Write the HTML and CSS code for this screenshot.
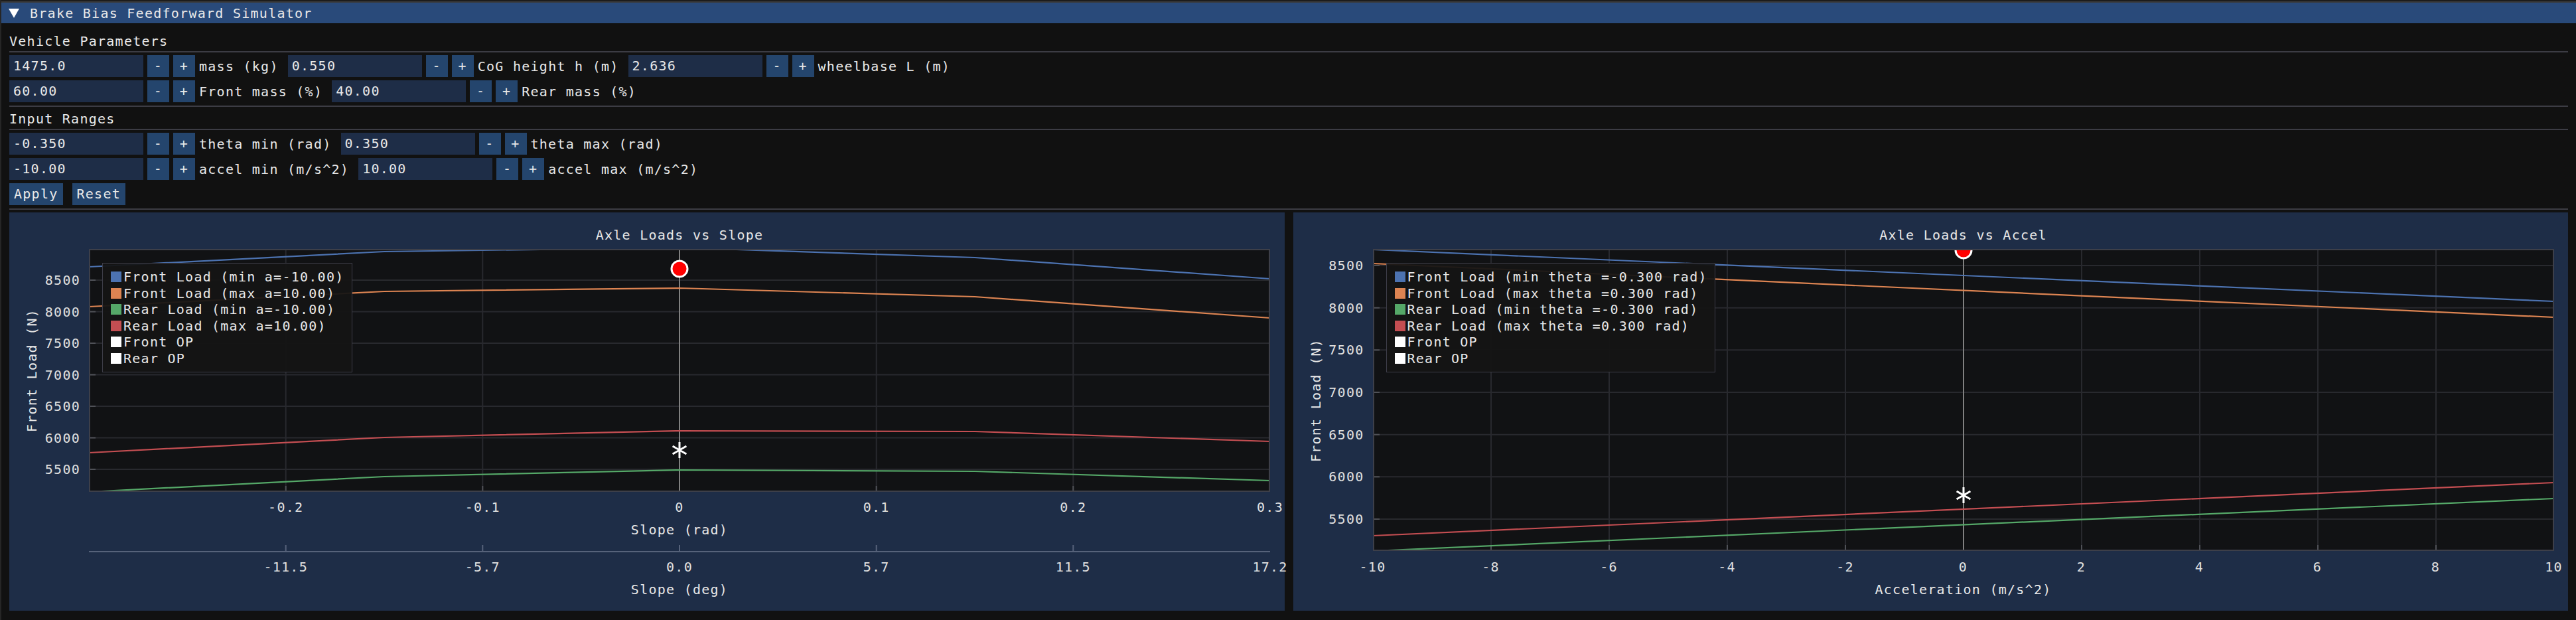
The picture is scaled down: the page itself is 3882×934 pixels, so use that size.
FILE: index.html
```html
<!DOCTYPE html>
<html>
<head>
<meta charset="utf-8">
<title>Brake Bias Feedforward Simulator</title>
<link rel="stylesheet" href="styles.css">
</head>
<body>
<div class="window">
  <div class="topstrip"></div>
  <div class="titlebar">
    <svg class="tri" width="16" height="14" viewBox="0 0 16 14"><polygon points="0,0 16,0 8,14" fill="#ffffff"/></svg>
    <span class="title-text">Brake Bias Feedforward Simulator</span>
  </div>
  <div class="content">
    <div class="hdr hdr-first">Vehicle Parameters</div>
    <div class="sep sep-after-hdr"></div>
    <div class="row">
      <div class="grp"><span class="field">1475.0</span><span class="btn">-</span><span class="btn">+</span><span class="lbl">mass (kg)</span></div>
      <div class="grp"><span class="field">0.550</span><span class="btn">-</span><span class="btn">+</span><span class="lbl">CoG height h (m)</span></div>
      <div class="grp"><span class="field">2.636</span><span class="btn">-</span><span class="btn">+</span><span class="lbl">wheelbase L (m)</span></div>
    </div>
    <div class="row">
      <div class="grp"><span class="field">60.00</span><span class="btn">-</span><span class="btn">+</span><span class="lbl">Front mass (%)</span></div>
      <div class="grp"><span class="field">40.00</span><span class="btn">-</span><span class="btn">+</span><span class="lbl">Rear mass (%)</span></div>
    </div>
    <div class="sep sep-after-row"></div>
    <div class="hdr hdr-second">Input Ranges</div>
    <div class="sep sep-after-hdr"></div>
    <div class="row">
      <div class="grp"><span class="field">-0.350</span><span class="btn">-</span><span class="btn">+</span><span class="lbl">theta min (rad)</span></div>
      <div class="grp"><span class="field">0.350</span><span class="btn">-</span><span class="btn">+</span><span class="lbl">theta max (rad)</span></div>
    </div>
    <div class="row">
      <div class="grp"><span class="field">-10.00</span><span class="btn">-</span><span class="btn">+</span><span class="lbl">accel min (m/s^2)</span></div>
      <div class="grp"><span class="field">10.00</span><span class="btn">-</span><span class="btn">+</span><span class="lbl">accel max (m/s^2)</span></div>
    </div>
    <div class="row">
      <span class="tbtn">Apply</span><span class="tbtn">Reset</span>
    </div>
    <div class="sep sep-after-row"></div>

    <div class="plots">
      <!-- Left plot -->
      <section class="frame">
        <div class="frame-title">Axle Loads vs Slope</div>
        <div class="yaxis">
          <span class="ylabel">Front Load (N)</span>
          <span class="ytick" style="top:47px">8500</span>
          <span class="ytick" style="top:94.5px">8000</span>
          <span class="ytick" style="top:142px">7500</span>
          <span class="ytick" style="top:189.5px">7000</span>
          <span class="ytick" style="top:237px">6500</span>
          <span class="ytick" style="top:284.5px">6000</span>
          <span class="ytick" style="top:332px">5500</span>
        </div>
        <div class="plot-area">
          <svg class="plot-svg" width="1780" height="366" viewBox="0 0 1780 366">
            <rect width="1780" height="366" fill="#111214"/>
            <g stroke="#28292e" stroke-width="2">
              <line x1="296.7" y1="0" x2="296.7" y2="366"/>
              <line x1="593.3" y1="0" x2="593.3" y2="366"/>
              <line x1="1186.7" y1="0" x2="1186.7" y2="366"/>
              <line x1="1483.3" y1="0" x2="1483.3" y2="366"/>
              <line x1="0" y1="47" x2="1780" y2="47"/>
              <line x1="0" y1="94.5" x2="1780" y2="94.5"/>
              <line x1="0" y1="142" x2="1780" y2="142"/>
              <line x1="0" y1="189.5" x2="1780" y2="189.5"/>
              <line x1="0" y1="237" x2="1780" y2="237"/>
              <line x1="0" y1="284.5" x2="1780" y2="284.5"/>
              <line x1="0" y1="332" x2="1780" y2="332"/>
            </g>
            <g stroke="#4f5157" stroke-width="2">
              <line x1="0" y1="47" x2="10" y2="47"/>
              <line x1="0" y1="94.5" x2="10" y2="94.5"/>
              <line x1="0" y1="142" x2="10" y2="142"/>
              <line x1="0" y1="189.5" x2="10" y2="189.5"/>
              <line x1="0" y1="237" x2="10" y2="237"/>
              <line x1="0" y1="284.5" x2="10" y2="284.5"/>
              <line x1="0" y1="332" x2="10" y2="332"/>
              <line x1="296.7" y1="357" x2="296.7" y2="366"/>
              <line x1="593.3" y1="357" x2="593.3" y2="366"/>
              <line x1="1186.7" y1="357" x2="1186.7" y2="366"/>
              <line x1="1483.3" y1="357" x2="1483.3" y2="366"/>
            </g>
            <line x1="890" y1="0" x2="890" y2="366" stroke="#808080" stroke-width="2"/>
            <g fill="none" stroke-width="2.2" stroke-linejoin="round">
              <polyline points="0,27 445,4 890,-2 1335,13 1780,45" stroke="#4c72b0"/>
              <polyline points="0,87 445,64 890,59 1335,72 1780,104" stroke="#dd8452"/>
              <polyline points="0,307 445,284 890,274 1335,275 1780,290" stroke="#c44e52"/>
              <polyline points="0,366 445,343 890,333 1335,335 1780,349" stroke="#55a868"/>
            </g>
            <circle cx="890" cy="30" r="12" fill="#ff0000" stroke="#ffffff" stroke-width="3"/>
            <path d="M890,291 V315 M879.6,297 L900.4,309 M879.6,309 L900.4,297" stroke="#ffffff" stroke-width="3" fill="none"/>
            <rect x="1" y="1" width="1778" height="364" fill="none" stroke="#3d3f49" stroke-width="2"/>
          </svg>
          <div class="legend">
            <div class="li"><span class="sw sw-blue"></span>Front Load (min a=-10.00)</div>
            <div class="li"><span class="sw sw-orange"></span>Front Load (max a=10.00)</div>
            <div class="li"><span class="sw sw-green"></span>Rear Load (min a=-10.00)</div>
            <div class="li"><span class="sw sw-red"></span>Rear Load (max a=10.00)</div>
            <div class="li"><span class="sw sw-white"></span>Front OP</div>
            <div class="li"><span class="sw sw-white"></span>Rear OP</div>
          </div>
        </div>
        <div class="xaxes">
          <div class="ticks-row">
            <span class="xtick" style="left:296.7px">-0.2</span>
            <span class="xtick" style="left:593.3px">-0.1</span>
            <span class="xtick" style="left:890px">0</span>
            <span class="xtick" style="left:1186.7px">0.1</span>
            <span class="xtick" style="left:1483.3px">0.2</span>
            <span class="xtick" style="left:1780px">0.3</span>
          </div>
          <div class="axis-label">Slope (rad)</div>
          <svg class="axis2" width="1780" height="12" viewBox="0 0 1780 12">
            <rect x="0" y="10" width="1780" height="2" fill="#56627a"/>
            <g fill="#56627a">
              <rect x="295.7" y="1" width="2" height="9"/>
              <rect x="592.3" y="1" width="2" height="9"/>
              <rect x="889" y="1" width="2" height="9"/>
              <rect x="1185.7" y="1" width="2" height="9"/>
              <rect x="1482.3" y="1" width="2" height="9"/>
            </g>
          </svg>
          <div class="ticks-row ticks-row-2">
            <span class="xtick" style="left:296.7px">-11.5</span>
            <span class="xtick" style="left:593.3px">-5.7</span>
            <span class="xtick" style="left:890px">0.0</span>
            <span class="xtick" style="left:1186.7px">5.7</span>
            <span class="xtick" style="left:1483.3px">11.5</span>
            <span class="xtick" style="left:1780px">17.2</span>
          </div>
          <div class="axis-label">Slope (deg)</div>
        </div>
      </section>

      <!-- Right plot -->
      <section class="frame frame-right">
        <div class="frame-title">Axle Loads vs Accel</div>
        <div class="yaxis">
          <span class="ylabel">Front Load (N)</span>
          <span class="ytick" style="top:25px">8500</span>
          <span class="ytick" style="top:88.7px">8000</span>
          <span class="ytick" style="top:152.3px">7500</span>
          <span class="ytick" style="top:216px">7000</span>
          <span class="ytick" style="top:279.7px">6500</span>
          <span class="ytick" style="top:343.3px">6000</span>
          <span class="ytick" style="top:407px">5500</span>
        </div>
        <div class="plot-area">
          <svg class="plot-svg" width="1780" height="455" viewBox="0 0 1780 455">
            <rect width="1780" height="455" fill="#111214"/>
            <g stroke="#28292e" stroke-width="2">
              <line x1="178" y1="0" x2="178" y2="455"/>
              <line x1="356" y1="0" x2="356" y2="455"/>
              <line x1="534" y1="0" x2="534" y2="455"/>
              <line x1="712" y1="0" x2="712" y2="455"/>
              <line x1="1068" y1="0" x2="1068" y2="455"/>
              <line x1="1246" y1="0" x2="1246" y2="455"/>
              <line x1="1424" y1="0" x2="1424" y2="455"/>
              <line x1="1602" y1="0" x2="1602" y2="455"/>
              <line x1="0" y1="25" x2="1780" y2="25"/>
              <line x1="0" y1="88.7" x2="1780" y2="88.7"/>
              <line x1="0" y1="152.3" x2="1780" y2="152.3"/>
              <line x1="0" y1="216" x2="1780" y2="216"/>
              <line x1="0" y1="279.7" x2="1780" y2="279.7"/>
              <line x1="0" y1="343.3" x2="1780" y2="343.3"/>
              <line x1="0" y1="407" x2="1780" y2="407"/>
            </g>
            <g stroke="#4f5157" stroke-width="2">
              <line x1="0" y1="25" x2="10" y2="25"/>
              <line x1="0" y1="88.7" x2="10" y2="88.7"/>
              <line x1="0" y1="152.3" x2="10" y2="152.3"/>
              <line x1="0" y1="216" x2="10" y2="216"/>
              <line x1="0" y1="279.7" x2="10" y2="279.7"/>
              <line x1="0" y1="343.3" x2="10" y2="343.3"/>
              <line x1="0" y1="407" x2="10" y2="407"/>
              <line x1="178" y1="446" x2="178" y2="455"/>
              <line x1="356" y1="446" x2="356" y2="455"/>
              <line x1="534" y1="446" x2="534" y2="455"/>
              <line x1="712" y1="446" x2="712" y2="455"/>
              <line x1="1068" y1="446" x2="1068" y2="455"/>
              <line x1="1246" y1="446" x2="1246" y2="455"/>
              <line x1="1424" y1="446" x2="1424" y2="455"/>
              <line x1="1602" y1="446" x2="1602" y2="455"/>
            </g>
            <line x1="890" y1="0" x2="890" y2="455" stroke="#808080" stroke-width="2"/>
            <g fill="none" stroke-width="2.2">
              <polyline points="0,1 1780,79" stroke="#4c72b0"/>
              <polyline points="0,22 1780,103" stroke="#dd8452"/>
              <polyline points="0,432 1780,352" stroke="#c44e52"/>
              <polyline points="0,455 1780,376" stroke="#55a868"/>
            </g>
            <circle cx="890" cy="2" r="12" fill="#ff0000" stroke="#ffffff" stroke-width="3"/>
            <path d="M890,359 V383 M879.6,365 L900.4,377 M879.6,377 L900.4,365" stroke="#ffffff" stroke-width="3" fill="none"/>
            <rect x="1" y="1" width="1778" height="453" fill="none" stroke="#3d3f49" stroke-width="2"/>
          </svg>
          <div class="legend">
            <div class="li"><span class="sw sw-blue"></span>Front Load (min theta =-0.300 rad)</div>
            <div class="li"><span class="sw sw-orange"></span>Front Load (max theta =0.300 rad)</div>
            <div class="li"><span class="sw sw-green"></span>Rear Load (min theta =-0.300 rad)</div>
            <div class="li"><span class="sw sw-red"></span>Rear Load (max theta =0.300 rad)</div>
            <div class="li"><span class="sw sw-white"></span>Front OP</div>
            <div class="li"><span class="sw sw-white"></span>Rear OP</div>
          </div>
        </div>
        <div class="xaxes">
          <div class="ticks-row ticks-row-single">
            <span class="xtick" style="left:0px">-10</span>
            <span class="xtick" style="left:178px">-8</span>
            <span class="xtick" style="left:356px">-6</span>
            <span class="xtick" style="left:534px">-4</span>
            <span class="xtick" style="left:712px">-2</span>
            <span class="xtick" style="left:890px">0</span>
            <span class="xtick" style="left:1068px">2</span>
            <span class="xtick" style="left:1246px">4</span>
            <span class="xtick" style="left:1424px">6</span>
            <span class="xtick" style="left:1602px">8</span>
            <span class="xtick" style="left:1780px">10</span>
          </div>
          <div class="axis-label">Acceleration (m/s^2)</div>
        </div>
      </section>
    </div>
  </div>
</div>
</body>
</html>
```

FILE: styles.css
```css
* {
  box-sizing: border-box;
  margin: 0;
  padding: 0;
}

html,
body {
  width: 3882px;
  height: 934px;
  overflow: hidden;
}

body {
  background: #0c0c0c;
  color: #e8e8e8;
  font-family: "DejaVu Sans Mono", "Liberation Mono", monospace;
  font-size: 20px;
  letter-spacing: 1.26px;
  line-height: 24px;
}

.window {
  height: 934px;
  background: #111111;
  border-left: 2px solid #262626;
  display: flex;
  flex-direction: column;
}

.topstrip {
  height: 4px;
  background: #1c1c1c;
  border-bottom: 2px solid #3a3a3a;
}

.titlebar {
  height: 31px;
  background: #294a7a;
  display: flex;
  align-items: center;
  padding-left: 11px;
}

.tri {
  display: block;
  margin-right: 16px;
}

.title-text {
  white-space: nowrap;
}

.content {
  display: flex;
  flex-direction: column;
  padding: 0 12px 0 12px;
}

.hdr {
  height: 24px;
  white-space: nowrap;
}

.hdr-first {
  margin-top: 15px;
}

.hdr-second {
  margin-top: 6px;
}

.sep {
  height: 2px;
  background: #3c3c44;
}

.sep-after-hdr {
  margin-top: 3px;
}

.sep-after-row {
  margin-top: 5px;
}

.row {
  display: flex;
  align-items: center;
  height: 33px;
  margin-top: 5px;
  white-space: nowrap;
}

.sep-after-hdr + .row {
  margin-top: 4px;
}

.grp {
  display: flex;
  align-items: center;
  margin-right: 14px;
}

.field {
  display: block;
  width: 202px;
  height: 33px;
  line-height: 33px;
  padding-left: 6px;
  background: #1e2d47;
}

.btn {
  display: block;
  width: 33px;
  height: 33px;
  line-height: 33px;
  margin-left: 6px;
  text-align: center;
  background: #24456d;
}

.lbl {
  margin-left: 6px;
}

.tbtn {
  display: block;
  height: 33px;
  line-height: 33px;
  padding: 0 7px;
  background: #24456d;
  margin-right: 14px;
}

/* ---------- plots ---------- */

.plots {
  display: flex;
  gap: 13px;
  margin-top: 4px;
  height: 600px;
}

.frame {
  flex: 1;
  background: #1e2d47;
  display: grid;
  grid-template-columns: 120px 1780px 1fr;
  grid-template-rows: 55px 366px 1fr;
}

.frame-right {
  grid-template-rows: 55px 455px 1fr;
}

.frame-title {
  grid-column: 2;
  grid-row: 1;
  padding-top: 22px;
  text-align: center;
  white-space: nowrap;
}

.yaxis {
  grid-column: 1;
  grid-row: 2;
  position: relative;
}

.ylabel {
  position: absolute;
  left: 34px;
  top: 50%;
  transform: translate(-50%, -50%) rotate(-90deg);
  white-space: nowrap;
}

.ytick {
  position: absolute;
  right: 13px;
  transform: translateY(-50%);
  color: #e0e0e0;
}

.plot-area {
  grid-column: 2;
  grid-row: 2;
  position: relative;
}

.plot-svg {
  display: block;
}

.legend {
  position: absolute;
  left: 20px;
  top: 21px;
  background: rgba(20, 20, 20, 0.94);
  border: 1px solid #3d3d48;
  padding: 8px 11px 8px 12px;
  white-space: nowrap;
}

.li {
  display: flex;
  align-items: center;
  height: 24.5px;
}

.sw {
  display: block;
  width: 16px;
  height: 16px;
  margin-right: 3px;
}

.sw-blue { background: #4c72b0; }
.sw-orange { background: #dd8452; }
.sw-green { background: #55a868; }
.sw-red { background: #c44e52; }
.sw-white { background: #ffffff; }

.xaxes {
  grid-column: 2;
  grid-row: 3;
  display: flex;
  flex-direction: column;
}

.ticks-row {
  position: relative;
  height: 24px;
  margin-top: 11px;
}

.ticks-row-2 {
  margin-top: 10px;
}

.ticks-row-single {
  margin-top: 12px;
}

.xtick {
  position: absolute;
  top: 0;
  transform: translateX(-50%);
  white-space: nowrap;
  color: #e0e0e0;
}

.axis-label {
  height: 24px;
  margin-top: 10px;
  text-align: center;
  white-space: nowrap;
}

.axis2 {
  display: block;
  margin-top: 10px;
}
```
